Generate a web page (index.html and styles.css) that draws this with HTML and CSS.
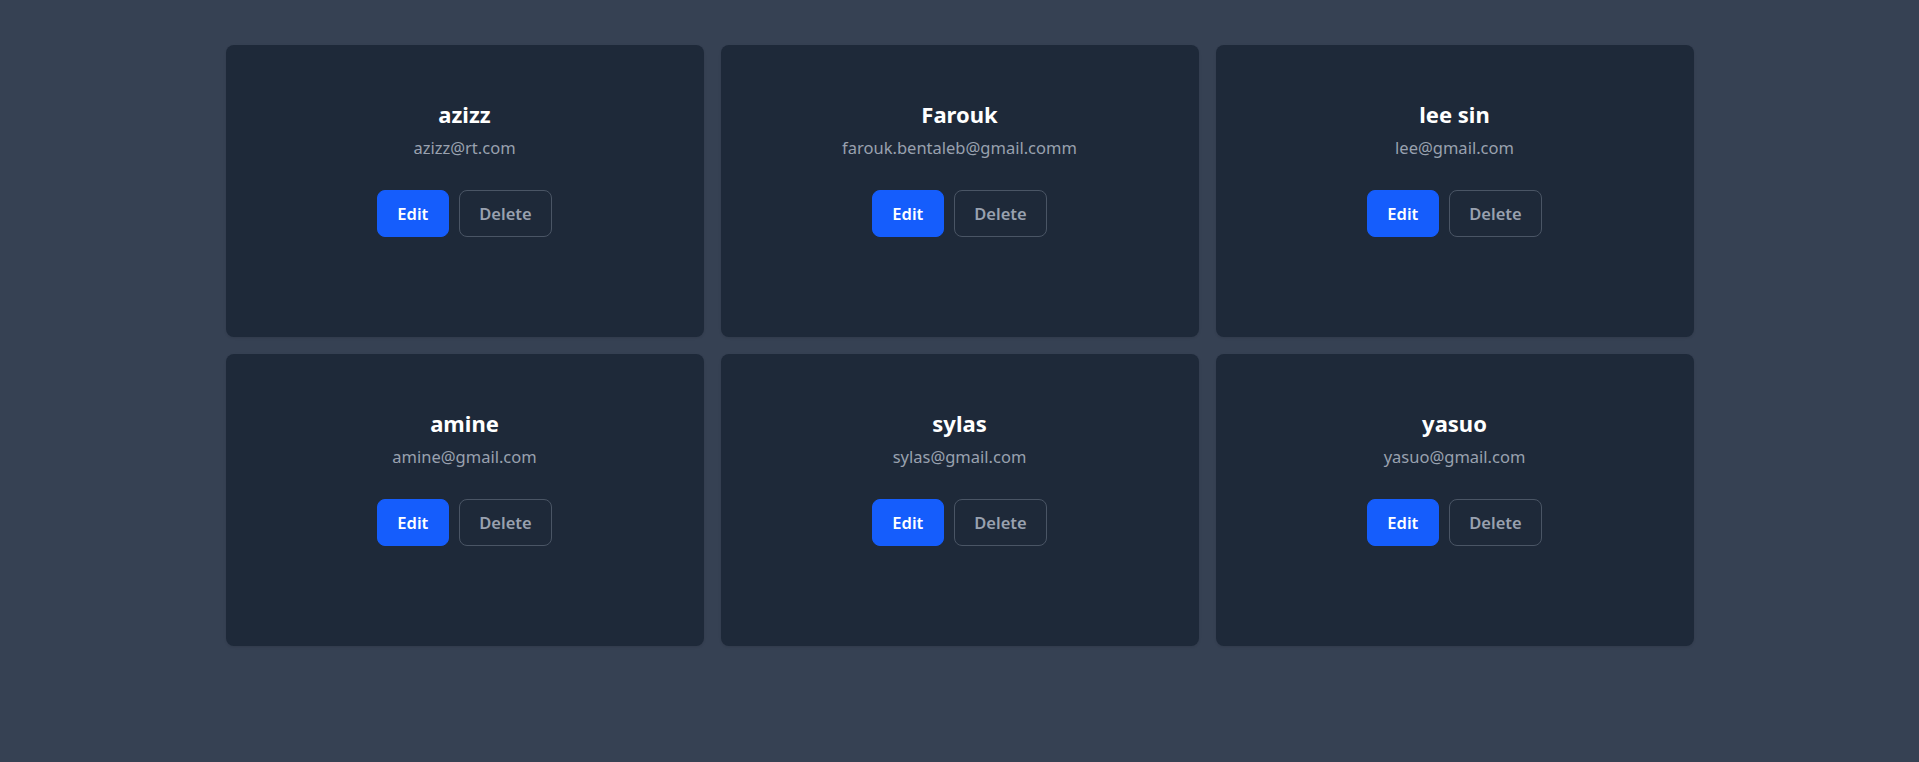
FILE: index.html
```html
<!DOCTYPE html>
<html lang="en">
<head>
<meta charset="utf-8">
<title>Users</title>
<link rel="stylesheet" href="styles.css">
</head>
<body>
<main class="page">
  <section class="grid">
    <article class="card">
      <h2 class="name">azizz</h2>
      <p class="email">azizz@rt.com</p>
      <div class="actions"><button class="btn btn-edit">Edit</button><button class="btn btn-delete">Delete</button></div>
    </article>
    <article class="card">
      <h2 class="name">Farouk</h2>
      <p class="email">farouk.bentaleb@gmail.comm</p>
      <div class="actions"><button class="btn btn-edit">Edit</button><button class="btn btn-delete">Delete</button></div>
    </article>
    <article class="card">
      <h2 class="name">lee sin</h2>
      <p class="email">lee@gmail.com</p>
      <div class="actions"><button class="btn btn-edit">Edit</button><button class="btn btn-delete">Delete</button></div>
    </article>
    <article class="card">
      <h2 class="name">amine</h2>
      <p class="email">amine@gmail.com</p>
      <div class="actions"><button class="btn btn-edit">Edit</button><button class="btn btn-delete">Delete</button></div>
    </article>
    <article class="card">
      <h2 class="name">sylas</h2>
      <p class="email">sylas@gmail.com</p>
      <div class="actions"><button class="btn btn-edit">Edit</button><button class="btn btn-delete">Delete</button></div>
    </article>
    <article class="card">
      <h2 class="name">yasuo</h2>
      <p class="email">yasuo@gmail.com</p>
      <div class="actions"><button class="btn btn-edit">Edit</button><button class="btn btn-delete">Delete</button></div>
    </article>
  </section>
</main>
</body>
</html>
```

FILE: styles.css
```css
* { box-sizing: border-box; }
html, body { margin: 0; padding: 0; }
body {
  background: #364153;
  font-family: "Segoe UI", "Noto Sans", "Open Sans", sans-serif;
  min-height: 762px;
}
.page {
  display: flex;
  justify-content: center;
  padding-top: 45px;
}
.grid {
  width: 1468px;
  display: grid;
  grid-template-columns: repeat(3, 1fr);
  column-gap: 17px;
  row-gap: 17px;
}
.card {
  background: #1e2939;
  border-radius: 8px;
  height: 292px;
  padding-top: 53px;
  display: flex;
  flex-direction: column;
  align-items: center;
  box-shadow: 0 1px 3px rgba(0,0,0,0.1);
}
.name {
  margin: 0;
  font-size: 22px;
  line-height: 32px;
  font-weight: 700;
  color: #ffffff;
}
.email {
  margin: 4px 0 0;
  font-size: 16.5px;
  line-height: 28px;
  color: #99a1af;
}
.actions {
  display: flex;
  gap: 10px;
  margin-top: 28px;
}
.btn {
  font-family: inherit;
  font-size: 16.5px;
  font-weight: 600;
  line-height: 27px;
  height: 47px;
  padding: 0 19.5px;
  border-radius: 8px;
  cursor: pointer;
}
.btn-edit {
  background: #155dfc;
  color: #ffffff;
  border: 1px solid #155dfc;
}
.btn-delete {
  background: transparent;
  color: #99a1af;
  border: 1px solid #4a5565;
}
```
